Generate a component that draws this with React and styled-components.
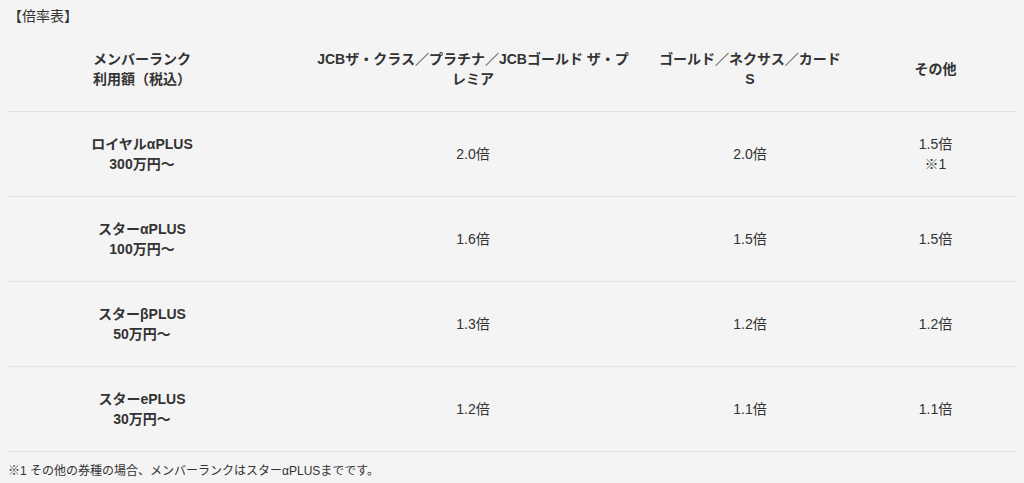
import React from "react";
import styled, { createGlobalStyle } from "styled-components";

const GlobalStyle = createGlobalStyle`
  html, body {
    margin: 0;
    padding: 0;
    background: #f4f4f4;
  }
  body {
    font-family: "Liberation Sans", "Noto Sans CJK JP", sans-serif;
    color: #333;
  }
`;

const columns = [
  { w: 270, pr: 0 },
  { w: 392, pr: 0 },
  { w: 186, pr: 24 },
  { w: 161, pr: 0 },
];

const header = [
  ["メンバーランク", "利用額（税込）"],
  ["JCBザ・クラス／プラチナ／JCBゴールド ザ・プ", "レミア"],
  ["ゴールド／ネクサス／カード", "S"],
  ["その他"],
];

const headerWidths = [null, 326, 190, null];

const rows = [
  { rank: ["ロイヤルαPLUS", "300万円〜"], vals: ["2.0倍", "2.0倍", ["1.5倍", "※1"]] },
  { rank: ["スターαPLUS", "100万円〜"], vals: ["1.6倍", "1.5倍", "1.5倍"] },
  { rank: ["スターβPLUS", "50万円〜"], vals: ["1.3倍", "1.2倍", "1.2倍"] },
  { rank: ["スターePLUS", "30万円〜"], vals: ["1.2倍", "1.1倍", "1.1倍"] },
];

export default function App() {
  return (
    <Page>
      <GlobalStyle />
      <Title>【倍率表】</Title>
      <Table>
        <Row $head>
          {header.map((lines, i) => (
            <Cell key={i} $pr={columns[i].pr} $bold>
              <Inner $w={headerWidths[i]}>
                {lines.map((l, j) => (
                  <Line key={j}>{l}</Line>
                ))}
              </Inner>
            </Cell>
          ))}
        </Row>
        {rows.map((r, i) => (
          <Row key={i}>
            <Cell $pr={columns[0].pr} $bold>
              <Inner>
                {r.rank.map((l, j) => (
                  <Line key={j}>{l}</Line>
                ))}
              </Inner>
            </Cell>
            {r.vals.map((v, j) => (
              <Cell key={j} $pr={columns[j + 1].pr}>
                <Inner>
                  {(Array.isArray(v) ? v : [v]).map((l, k) => (
                    <Line key={k}>{l}</Line>
                  ))}
                </Inner>
              </Cell>
            ))}
          </Row>
        ))}
      </Table>
      <Note>※1 その他の券種の場合、メンバーランクはスターαPLUSまでです。</Note>
    </Page>
  );
}

const Page = styled.div`
  padding: 6px 7px 0;
`;

const Title = styled.div`
  font-size: 14px;
  line-height: 20px;
  padding-left: 1px;
`;

const Table = styled.div`
  width: 1009px;
`;

const Row = styled.div`
  display: grid;
  grid-template-columns: ${columns.map((c) => c.w + "px").join(" ")};
  height: ${(p) => (p.$head ? "85px" : "84px")};
  border-bottom: 1px solid #e2e2e2;
`;

const Cell = styled.div`
  display: flex;
  align-items: center;
  justify-content: center;
  padding-right: ${(p) => p.$pr}px;
  font-size: 14px;
  line-height: 20px;
  font-weight: ${(p) => (p.$bold ? 700 : 400)};
  text-align: center;
  min-width: 0;
`;

const Inner = styled.div`
  flex-shrink: 0;
  width: ${(p) => (p.$w ? p.$w + "px" : "auto")};
`;

const Line = styled.div`
  white-space: nowrap;
`;

const Note = styled.div`
  font-size: 12px;
  line-height: 18px;
  margin-top: 10px;
  padding-left: 1px;
`;
